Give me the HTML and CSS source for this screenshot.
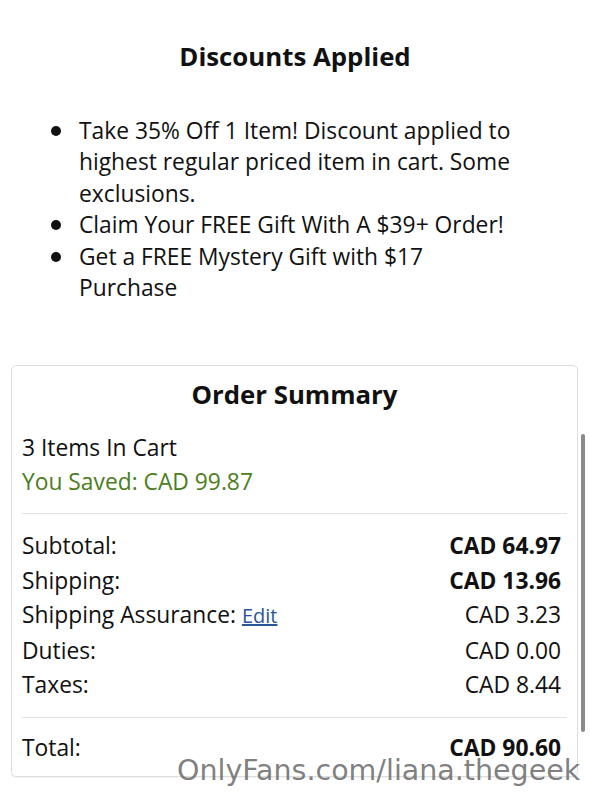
FILE: index.html
```html
<html>
    <head>
        <title>Cart</title>
        <link rel="stylesheet" href="styles.css">
    </head>
    <body>
        <div class="discounts">
            <h2 class="title">Discounts Applied</h2>
            <ul class="promo-list">
                <li>Take 35% Off 1 Item! Discount applied to highest regular priced item in cart. Some exclusions.</li>
                <li>Claim Your FREE Gift With A $39+ Order!</li>
                <li>Get a FREE Mystery Gift with $17 Purchase</li>
            </ul>
        </div>
        <div class="summary-wrap">
            <div class="summary">
                <h2 class="title">Order Summary</h2>
                <div class="count">3 Items In Cart</div>
                <div class="saved">You Saved: CAD 99.87</div>
                <div class="rows">
                    <div class="row"><span>Subtotal:</span><b>CAD 64.97</b></div>
                    <div class="row"><span>Shipping:</span><b>CAD 13.96</b></div>
                    <div class="row"><span>Shipping Assurance: <a href="#" class="edit">Edit</a></span><span>CAD 3.23</span></div>
                    <div class="row"><span>Duties:</span><span>CAD 0.00</span></div>
                    <div class="row"><span>Taxes:</span><span>CAD 8.44</span></div>
                </div>
                <div class="row total"><span>Total:</span><b>CAD 90.60</b></div>
            </div>
            <div class="scrollbar"></div>
        </div>
        <div class="watermark">OnlyFans.com/liana.thegeek</div>
    </body>
</html>
```

FILE: styles.css
```css
body {
    margin: 0;
    padding: 0;
    font-family: "Open Sans", sans-serif;
    color: #111;
    background: #fff;
    height: 800px;
    overflow: hidden;
    position: relative;
}
.title {
    margin: 0;
    font-size: 25.8px;
    font-weight: 700;
    text-align: center;
    line-height: 34px;
}
.discounts {
    padding-top: 39px;
}
.promo-list {
    margin: 42px 0 0;
    padding: 0 0 0 51px;
    width: 470px;
    list-style: none;
    font-size: 22.8px;
    line-height: 31.4px;
}
.promo-list li {
    display: flex;
    gap: 18px;
}
.promo-list li::before {
    content: "";
    flex: none;
    width: 10px;
    height: 10px;
    margin-top: 11px;
    border-radius: 50%;
    background: #111;
}
.summary-wrap {
    margin: 62px 0 0 11px;
    position: relative;
    width: 574px;
}
.summary {
    width: 567px;
    box-sizing: border-box;
    border: 1px solid #dedede;
    border-radius: 5px;
    padding: 11px 10px 11px 10px;
    font-size: 22.8px;
    box-shadow: 0 1px 2px rgba(0, 0, 0, 0.06);
}
.count {
    margin-top: 20px;
    line-height: 34px;
}
.saved {
    color: #4d7d22;
    line-height: 34px;
}
.rows {
    margin-top: 14px;
    border-top: 1px solid #e2e2e2;
    border-bottom: 1px solid #e2e2e2;
    padding: 15px 6px 14px 0;
}
.row {
    display: flex;
    justify-content: space-between;
    line-height: 34.5px;
}
.total {
    padding: 13px 6px 0 0;
    line-height: 34px;
}
.edit {
    color: #2a5599;
    font-size: 20px;
}
.scrollbar {
    position: absolute;
    right: 0;
    top: 69px;
    width: 4px;
    height: 298px;
    border-radius: 2px;
    background: #8a8a8a;
}
.watermark {
    position: absolute;
    left: 177px;
    top: 754px;
    font-family: "DejaVu Sans", sans-serif;
    font-size: 28.5px;
    color: rgba(112, 112, 112, 0.9);
}
```
